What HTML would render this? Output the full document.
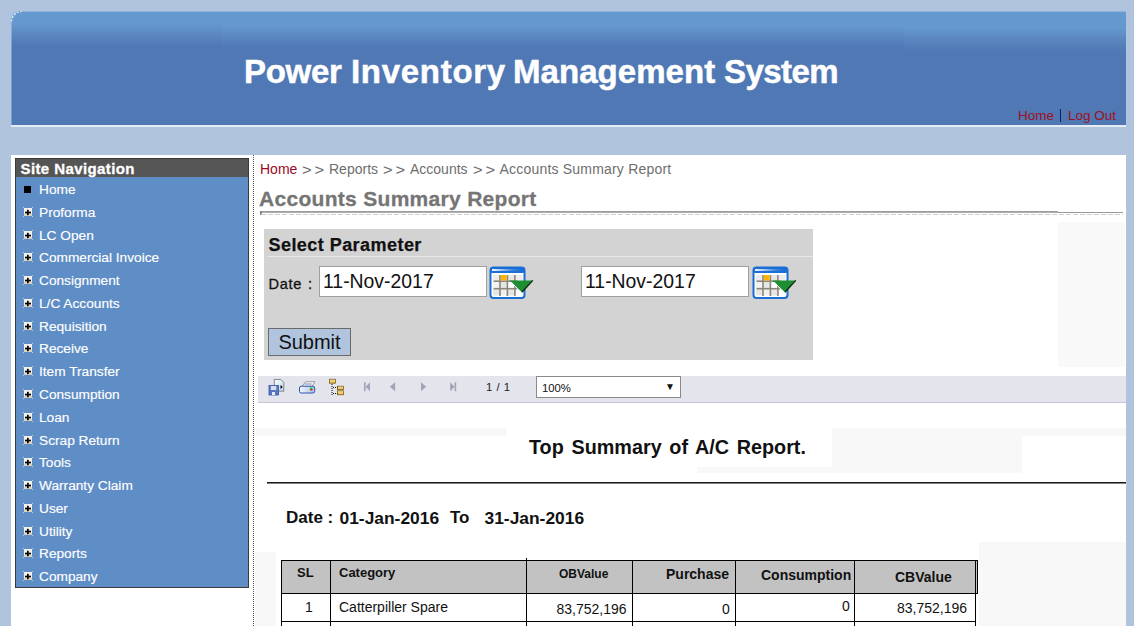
<!DOCTYPE html>
<html><head><meta charset="utf-8">
<style>
*{box-sizing:border-box}
html,body{margin:0;padding:0}
body{width:1134px;height:626px;overflow:hidden;background:#b0c4de;position:relative;font-family:"Liberation Sans",sans-serif}
.abs{position:absolute}
#hdr{left:11px;top:11px;width:1115px;height:114px;border-top-left-radius:10px;
 background:linear-gradient(to bottom,#6a9bd0 0px,#6699cf 1px,#6598ce 15px,#5b87c1 26px,#4f78b4 37px,#4f78b4 114px)}
#hline{left:11px;top:125px;width:1115px;height:2px;background:#e6ecf4}
#title span{position:absolute;top:0}
#title{left:244px;top:53px;font-size:33px;letter-spacing:0.05px;-webkit-text-stroke:0.5px #fff;font-weight:bold;color:#fff;white-space:nowrap}
#toplinks{left:1018px;top:108px;font-size:13.5px;color:#a01020;white-space:nowrap}
#toplinks i{position:absolute;left:41.5px;top:1px;width:1.5px;height:13px;background:#101c66}
#toplinks u{position:absolute;left:50px;top:0;text-decoration:none}
#wrap{left:11px;top:155px;width:1115px;height:480px;background:#fff}
#nav{left:15px;top:158px;width:234px;height:430px;background:#5f8dc6;border:1px solid #3a3a3a}
#navh{left:0;top:0;width:232px;height:18px;background:#555;color:#fff;font-weight:bold;font-size:15px;letter-spacing:0.4px;-webkit-text-stroke:0.3px #fff;padding-left:4.5px;line-height:20px}
.ni{position:absolute;left:23px;color:#fff;font-size:13.7px;-webkit-text-stroke:0.15px #fff;white-space:nowrap}
.ni .pl{position:absolute;left:-16px;top:2px}
.ni .sq{position:absolute;left:-15px;top:4px;width:7px;height:7px;background:#000}
#vdot{left:253px;top:155px;width:1px;height:471px;border-left:1px dotted #555}
#crumb{left:260px;top:161px;font-size:14px;color:#6e6e6e;white-space:nowrap}
#crumb>*{position:absolute;top:0;font-style:normal;font-weight:normal}
#crumb b{color:#9a0a1e}
#crumb i{letter-spacing:2.5px;transform:scaleX(1.18);transform-origin:0 0;top:0.5px}
#ptitle{left:259px;top:187px;font-size:21px;letter-spacing:0.3px;font-weight:bold;color:#757575;-webkit-text-stroke:0.3px #757575;white-space:nowrap}
#l1{left:260px;top:211px;width:798px;height:2px;background:linear-gradient(#979797,#b5b5b5)}
#l1b{left:1058px;top:212px;width:65px;height:1px;background:#999}
#ltick{left:260px;top:211px;width:1.5px;height:4px;background:#8a8a8a}
#l2{left:261px;top:214px;width:862px;height:1px;background:repeating-linear-gradient(to right,#cfcfcf 0,#cfcfcf 5px,transparent 5px,transparent 7px)}
#rgray{left:1058px;top:222px;width:67px;height:145px;background:#f9f9f9}
#pbox{left:264px;top:229px;width:549px;height:131px;background:#d3d3d3}
#psel{left:268.5px;top:235px;font-size:18px;letter-spacing:0.45px;-webkit-text-stroke:0.25px #111;font-weight:bold;color:#111;white-space:nowrap}
#pline{left:268px;top:256px;width:545px;height:1px;background:#e8e8e8}
#dlbl{left:268.5px;top:275.5px;font-size:14.6px;letter-spacing:0.7px;-webkit-text-stroke:0.3px #111;color:#111}
.inp{position:absolute;top:266px;width:168px;height:31px;background:#fff;border:1px solid #a0a0a0;font-size:19.4px;color:#111;padding:3px 0 0 3px;white-space:nowrap}
.calw{position:absolute;top:266px;width:46px;height:34px}
.calw svg{display:block}
#submit{left:268px;top:328px;width:83px;height:28px;background:#b0c4de;border:1.5px solid #6a6a6a;font-size:20px;color:#111;text-align:center;line-height:27px;padding-left:0px}
#tbar{left:258px;top:376px;width:868px;height:27px;background:#e4e4ec;border-bottom:1px solid #c4c4d4}
#sel{left:536px;top:376px;width:145px;height:22px;background:#fff;border:1px solid #8a8a8a;font-size:11.3px;line-height:14px;padding:4px 0 0 5px;color:#111}
#pg{left:486px;top:380.5px;font-size:11.3px;color:#222;word-spacing:1px}
#rtitle{left:529px;top:435.5px;font-size:19.8px;word-spacing:2.2px;font-weight:bold;color:#111;white-space:nowrap}
#hr2{left:267px;top:482px;width:859px;height:2px;background:linear-gradient(#1a1a1a 50%,#808080 50%)}
#dt{left:286px;top:508px;font-size:17px;font-weight:bold;color:#111;white-space:nowrap}
#dt span{position:absolute;top:0}
#tbl{left:0;top:0}
.hb{position:absolute;background:#c2c2c2}
.ln{position:absolute;background:#000}
.tx{position:absolute;white-space:nowrap;color:#111;font-size:14px;line-height:16px}
.th{font-weight:bold}
</style></head><body>
<div class="abs" style="left:11px;top:11px;width:11px;height:11px;background:#a9c4e6"></div>
<div id="hdr" class="abs"></div>
<div class="abs" style="left:11px;top:11px;width:211px;height:114px;border-top-left-radius:10px;background:linear-gradient(to bottom,#6a9bd0 0px,#6699cf 1px,#6598ce 13px,#5b87c1 24px,#4f78b4 35px,#4f78b4 114px)"></div>
<div class="abs" style="left:904px;top:11px;width:222px;height:114px;background:linear-gradient(to bottom,#6a9bd0 0px,#6699cf 1px,#6598ce 17px,#5b87c1 28px,#4f78b4 40px,#4f78b4 114px)"></div>
<svg class="abs" style="left:11px;top:11px" width="14" height="14" viewBox="0 0 14 14"><path d="M0.6,10.5 A10,10 0 0 1 10.5,0.6" fill="none" stroke="#f2f6fb" stroke-width="1.1" stroke-dasharray="2.2,1.3"/></svg>
<div class="abs" style="left:21px;top:11px;width:1105px;height:1px;background:#a9c4e6;opacity:0.6"></div>
<div class="abs" style="left:11px;top:21px;width:1px;height:104px;background:#a9c4e6;opacity:0.5"></div>
<div id="hline" class="abs"></div>
<div id="title" class="abs"><span style="left:0;letter-spacing:-0.3px">Power</span><span style="left:107px;letter-spacing:0.7px">Inventory</span><span style="left:269px">Management</span><span style="left:480px;letter-spacing:-0.55px">System</span></div>
<div id="toplinks" class="abs">Home<i></i><u>Log Out</u></div>
<div id="wrap" class="abs"></div>
<div id="nav" class="abs">
 <div id="navh" class="abs">Site Navigation</div>
 <div class="ni" style="top:23.00px"><i class="sq"></i>Home</div>
 <div class="ni" style="top:45.78px"><svg class="pl" width="10" height="10" viewBox="0 0 10 10"><rect x="1" y="1" width="8" height="8" fill="#f3f1ec"/><rect x="1" y="7" width="8" height="2" fill="#ddd3c2"/><rect x="2" y="4.7" width="6" height="1.7" fill="#000"/><rect x="4" y="2.8" width="1.7" height="5.4" fill="#000"/><rect x="0" y="0" width="1" height="1" fill="#c9c9c0"/><rect x="9" y="0" width="1" height="1" fill="#c9c9c0"/><rect x="0" y="9" width="1" height="1" fill="#c9c9c0"/><rect x="9" y="9" width="1" height="1" fill="#c9c9c0"/></svg>Proforma</div>
 <div class="ni" style="top:68.56px"><svg class="pl" width="10" height="10" viewBox="0 0 10 10"><rect x="1" y="1" width="8" height="8" fill="#f3f1ec"/><rect x="1" y="7" width="8" height="2" fill="#ddd3c2"/><rect x="2" y="4.7" width="6" height="1.7" fill="#000"/><rect x="4" y="2.8" width="1.7" height="5.4" fill="#000"/><rect x="0" y="0" width="1" height="1" fill="#c9c9c0"/><rect x="9" y="0" width="1" height="1" fill="#c9c9c0"/><rect x="0" y="9" width="1" height="1" fill="#c9c9c0"/><rect x="9" y="9" width="1" height="1" fill="#c9c9c0"/></svg>LC Open</div>
 <div class="ni" style="top:91.34px"><svg class="pl" width="10" height="10" viewBox="0 0 10 10"><rect x="1" y="1" width="8" height="8" fill="#f3f1ec"/><rect x="1" y="7" width="8" height="2" fill="#ddd3c2"/><rect x="2" y="4.7" width="6" height="1.7" fill="#000"/><rect x="4" y="2.8" width="1.7" height="5.4" fill="#000"/><rect x="0" y="0" width="1" height="1" fill="#c9c9c0"/><rect x="9" y="0" width="1" height="1" fill="#c9c9c0"/><rect x="0" y="9" width="1" height="1" fill="#c9c9c0"/><rect x="9" y="9" width="1" height="1" fill="#c9c9c0"/></svg>Commercial Invoice</div>
 <div class="ni" style="top:114.12px"><svg class="pl" width="10" height="10" viewBox="0 0 10 10"><rect x="1" y="1" width="8" height="8" fill="#f3f1ec"/><rect x="1" y="7" width="8" height="2" fill="#ddd3c2"/><rect x="2" y="4.7" width="6" height="1.7" fill="#000"/><rect x="4" y="2.8" width="1.7" height="5.4" fill="#000"/><rect x="0" y="0" width="1" height="1" fill="#c9c9c0"/><rect x="9" y="0" width="1" height="1" fill="#c9c9c0"/><rect x="0" y="9" width="1" height="1" fill="#c9c9c0"/><rect x="9" y="9" width="1" height="1" fill="#c9c9c0"/></svg>Consignment</div>
 <div class="ni" style="top:136.90px"><svg class="pl" width="10" height="10" viewBox="0 0 10 10"><rect x="1" y="1" width="8" height="8" fill="#f3f1ec"/><rect x="1" y="7" width="8" height="2" fill="#ddd3c2"/><rect x="2" y="4.7" width="6" height="1.7" fill="#000"/><rect x="4" y="2.8" width="1.7" height="5.4" fill="#000"/><rect x="0" y="0" width="1" height="1" fill="#c9c9c0"/><rect x="9" y="0" width="1" height="1" fill="#c9c9c0"/><rect x="0" y="9" width="1" height="1" fill="#c9c9c0"/><rect x="9" y="9" width="1" height="1" fill="#c9c9c0"/></svg>L/C Accounts</div>
 <div class="ni" style="top:159.68px"><svg class="pl" width="10" height="10" viewBox="0 0 10 10"><rect x="1" y="1" width="8" height="8" fill="#f3f1ec"/><rect x="1" y="7" width="8" height="2" fill="#ddd3c2"/><rect x="2" y="4.7" width="6" height="1.7" fill="#000"/><rect x="4" y="2.8" width="1.7" height="5.4" fill="#000"/><rect x="0" y="0" width="1" height="1" fill="#c9c9c0"/><rect x="9" y="0" width="1" height="1" fill="#c9c9c0"/><rect x="0" y="9" width="1" height="1" fill="#c9c9c0"/><rect x="9" y="9" width="1" height="1" fill="#c9c9c0"/></svg>Requisition</div>
 <div class="ni" style="top:182.46px"><svg class="pl" width="10" height="10" viewBox="0 0 10 10"><rect x="1" y="1" width="8" height="8" fill="#f3f1ec"/><rect x="1" y="7" width="8" height="2" fill="#ddd3c2"/><rect x="2" y="4.7" width="6" height="1.7" fill="#000"/><rect x="4" y="2.8" width="1.7" height="5.4" fill="#000"/><rect x="0" y="0" width="1" height="1" fill="#c9c9c0"/><rect x="9" y="0" width="1" height="1" fill="#c9c9c0"/><rect x="0" y="9" width="1" height="1" fill="#c9c9c0"/><rect x="9" y="9" width="1" height="1" fill="#c9c9c0"/></svg>Receive</div>
 <div class="ni" style="top:205.24px"><svg class="pl" width="10" height="10" viewBox="0 0 10 10"><rect x="1" y="1" width="8" height="8" fill="#f3f1ec"/><rect x="1" y="7" width="8" height="2" fill="#ddd3c2"/><rect x="2" y="4.7" width="6" height="1.7" fill="#000"/><rect x="4" y="2.8" width="1.7" height="5.4" fill="#000"/><rect x="0" y="0" width="1" height="1" fill="#c9c9c0"/><rect x="9" y="0" width="1" height="1" fill="#c9c9c0"/><rect x="0" y="9" width="1" height="1" fill="#c9c9c0"/><rect x="9" y="9" width="1" height="1" fill="#c9c9c0"/></svg>Item Transfer</div>
 <div class="ni" style="top:228.02px"><svg class="pl" width="10" height="10" viewBox="0 0 10 10"><rect x="1" y="1" width="8" height="8" fill="#f3f1ec"/><rect x="1" y="7" width="8" height="2" fill="#ddd3c2"/><rect x="2" y="4.7" width="6" height="1.7" fill="#000"/><rect x="4" y="2.8" width="1.7" height="5.4" fill="#000"/><rect x="0" y="0" width="1" height="1" fill="#c9c9c0"/><rect x="9" y="0" width="1" height="1" fill="#c9c9c0"/><rect x="0" y="9" width="1" height="1" fill="#c9c9c0"/><rect x="9" y="9" width="1" height="1" fill="#c9c9c0"/></svg>Consumption</div>
 <div class="ni" style="top:250.80px"><svg class="pl" width="10" height="10" viewBox="0 0 10 10"><rect x="1" y="1" width="8" height="8" fill="#f3f1ec"/><rect x="1" y="7" width="8" height="2" fill="#ddd3c2"/><rect x="2" y="4.7" width="6" height="1.7" fill="#000"/><rect x="4" y="2.8" width="1.7" height="5.4" fill="#000"/><rect x="0" y="0" width="1" height="1" fill="#c9c9c0"/><rect x="9" y="0" width="1" height="1" fill="#c9c9c0"/><rect x="0" y="9" width="1" height="1" fill="#c9c9c0"/><rect x="9" y="9" width="1" height="1" fill="#c9c9c0"/></svg>Loan</div>
 <div class="ni" style="top:273.58px"><svg class="pl" width="10" height="10" viewBox="0 0 10 10"><rect x="1" y="1" width="8" height="8" fill="#f3f1ec"/><rect x="1" y="7" width="8" height="2" fill="#ddd3c2"/><rect x="2" y="4.7" width="6" height="1.7" fill="#000"/><rect x="4" y="2.8" width="1.7" height="5.4" fill="#000"/><rect x="0" y="0" width="1" height="1" fill="#c9c9c0"/><rect x="9" y="0" width="1" height="1" fill="#c9c9c0"/><rect x="0" y="9" width="1" height="1" fill="#c9c9c0"/><rect x="9" y="9" width="1" height="1" fill="#c9c9c0"/></svg>Scrap Return</div>
 <div class="ni" style="top:296.36px"><svg class="pl" width="10" height="10" viewBox="0 0 10 10"><rect x="1" y="1" width="8" height="8" fill="#f3f1ec"/><rect x="1" y="7" width="8" height="2" fill="#ddd3c2"/><rect x="2" y="4.7" width="6" height="1.7" fill="#000"/><rect x="4" y="2.8" width="1.7" height="5.4" fill="#000"/><rect x="0" y="0" width="1" height="1" fill="#c9c9c0"/><rect x="9" y="0" width="1" height="1" fill="#c9c9c0"/><rect x="0" y="9" width="1" height="1" fill="#c9c9c0"/><rect x="9" y="9" width="1" height="1" fill="#c9c9c0"/></svg>Tools</div>
 <div class="ni" style="top:319.14px"><svg class="pl" width="10" height="10" viewBox="0 0 10 10"><rect x="1" y="1" width="8" height="8" fill="#f3f1ec"/><rect x="1" y="7" width="8" height="2" fill="#ddd3c2"/><rect x="2" y="4.7" width="6" height="1.7" fill="#000"/><rect x="4" y="2.8" width="1.7" height="5.4" fill="#000"/><rect x="0" y="0" width="1" height="1" fill="#c9c9c0"/><rect x="9" y="0" width="1" height="1" fill="#c9c9c0"/><rect x="0" y="9" width="1" height="1" fill="#c9c9c0"/><rect x="9" y="9" width="1" height="1" fill="#c9c9c0"/></svg>Warranty Claim</div>
 <div class="ni" style="top:341.92px"><svg class="pl" width="10" height="10" viewBox="0 0 10 10"><rect x="1" y="1" width="8" height="8" fill="#f3f1ec"/><rect x="1" y="7" width="8" height="2" fill="#ddd3c2"/><rect x="2" y="4.7" width="6" height="1.7" fill="#000"/><rect x="4" y="2.8" width="1.7" height="5.4" fill="#000"/><rect x="0" y="0" width="1" height="1" fill="#c9c9c0"/><rect x="9" y="0" width="1" height="1" fill="#c9c9c0"/><rect x="0" y="9" width="1" height="1" fill="#c9c9c0"/><rect x="9" y="9" width="1" height="1" fill="#c9c9c0"/></svg>User</div>
 <div class="ni" style="top:364.70px"><svg class="pl" width="10" height="10" viewBox="0 0 10 10"><rect x="1" y="1" width="8" height="8" fill="#f3f1ec"/><rect x="1" y="7" width="8" height="2" fill="#ddd3c2"/><rect x="2" y="4.7" width="6" height="1.7" fill="#000"/><rect x="4" y="2.8" width="1.7" height="5.4" fill="#000"/><rect x="0" y="0" width="1" height="1" fill="#c9c9c0"/><rect x="9" y="0" width="1" height="1" fill="#c9c9c0"/><rect x="0" y="9" width="1" height="1" fill="#c9c9c0"/><rect x="9" y="9" width="1" height="1" fill="#c9c9c0"/></svg>Utility</div>
 <div class="ni" style="top:387.48px"><svg class="pl" width="10" height="10" viewBox="0 0 10 10"><rect x="1" y="1" width="8" height="8" fill="#f3f1ec"/><rect x="1" y="7" width="8" height="2" fill="#ddd3c2"/><rect x="2" y="4.7" width="6" height="1.7" fill="#000"/><rect x="4" y="2.8" width="1.7" height="5.4" fill="#000"/><rect x="0" y="0" width="1" height="1" fill="#c9c9c0"/><rect x="9" y="0" width="1" height="1" fill="#c9c9c0"/><rect x="0" y="9" width="1" height="1" fill="#c9c9c0"/><rect x="9" y="9" width="1" height="1" fill="#c9c9c0"/></svg>Reports</div>
 <div class="ni" style="top:410.26px"><svg class="pl" width="10" height="10" viewBox="0 0 10 10"><rect x="1" y="1" width="8" height="8" fill="#f3f1ec"/><rect x="1" y="7" width="8" height="2" fill="#ddd3c2"/><rect x="2" y="4.7" width="6" height="1.7" fill="#000"/><rect x="4" y="2.8" width="1.7" height="5.4" fill="#000"/><rect x="0" y="0" width="1" height="1" fill="#c9c9c0"/><rect x="9" y="0" width="1" height="1" fill="#c9c9c0"/><rect x="0" y="9" width="1" height="1" fill="#c9c9c0"/><rect x="9" y="9" width="1" height="1" fill="#c9c9c0"/></svg>Company</div>
</div>
<div id="vdot" class="abs"></div>
<div id="crumb" class="abs"><b style="left:0">Home</b><i style="left:42.3px">&gt;&gt;</i><span style="left:69px">Reports</span><i style="left:123.3px">&gt;&gt;</i><span style="left:150px">Accounts</span><i style="left:212.5px">&gt;&gt;</i><span style="left:239.5px;letter-spacing:0.2px">Accounts Summary Report</span></div>
<div id="ptitle" class="abs">Accounts Summary Report</div>
<div id="l1" class="abs"></div><div id="l1b" class="abs"></div><div id="ltick" class="abs"></div>
<div id="l2" class="abs"></div>
<div id="rgray" class="abs"></div>
<div id="pbox" class="abs"></div>
<div id="psel" class="abs">Select Parameter</div>
<div id="pline" class="abs"></div>
<div id="dlbl" class="abs">Date<span style="position:absolute;left:39.5px;top:0">:</span></div>
<div class="inp" style="left:319px">11-Nov-2017</div>
<div class="calw" style="left:489px"><svg class="cal" width="46" height="34" viewBox="0 0 46 34"><defs><linearGradient id="hg" x1="0" y1="0" x2="1" y2="0"><stop offset="0" stop-color="#fff" stop-opacity="0.95"/><stop offset="0.7" stop-color="#fff" stop-opacity="0.2"/><stop offset="1" stop-color="#fff" stop-opacity="0"/></linearGradient></defs>
<rect x="1.5" y="1.5" width="34" height="30.5" rx="3" fill="#fff" stroke="#1b6ed6" stroke-width="2"/>
<rect x="1" y="1" width="35" height="6" rx="2.5" fill="#1b6ed6"/><rect x="3" y="3" width="28" height="2" fill="url(#hg)"/>
<rect x="4" y="9" width="7" height="5.5" fill="#ececec"/><rect x="19" y="9" width="7" height="5.5" fill="#e6e6e6"/><rect x="26.5" y="9" width="7" height="5.5" fill="#ececec"/>
<rect x="4" y="16" width="7" height="6" fill="#f2f2f2"/><rect x="12" y="16" width="6" height="6" fill="#e6e6e6"/><rect x="4" y="23.5" width="7" height="6" fill="#e6e6e6"/><rect x="12" y="23.5" width="6" height="6" fill="#efefef"/><rect x="19" y="23.5" width="7" height="6" fill="#e6e6e6"/>
<rect x="10.2" y="9" width="1.6" height="21" fill="#8c857a"/><rect x="17.6" y="9" width="1.6" height="21" fill="#8c857a"/><rect x="25.1" y="9" width="1.6" height="21" fill="#8c857a"/>
<rect x="4.5" y="14.4" width="24" height="1.6" fill="#8c857a"/><rect x="4.5" y="21.9" width="24" height="1.6" fill="#8c857a"/>
<rect x="11.8" y="9" width="5.8" height="5.4" fill="#ffb400"/>
<polygon points="20.5,14.4 43.8,14.4 32.9,26.3" fill="#1e8e32"/>
<polyline points="43.8,14.4 32.9,26.3" fill="none" stroke="#0a2a10" stroke-width="1.3"/>
<polyline points="22.2,16 33,27.5" fill="none" stroke="#f4f4f4" stroke-width="1"/>
</svg></div>
<div class="inp" style="left:581px">11-Nov-2017</div>
<div class="calw" style="left:752px"><svg class="cal" width="46" height="34" viewBox="0 0 46 34"><defs><linearGradient id="hg2" x1="0" y1="0" x2="1" y2="0"><stop offset="0" stop-color="#fff" stop-opacity="0.95"/><stop offset="0.7" stop-color="#fff" stop-opacity="0.2"/><stop offset="1" stop-color="#fff" stop-opacity="0"/></linearGradient></defs>
<rect x="1.5" y="1.5" width="34" height="30.5" rx="3" fill="#fff" stroke="#1b6ed6" stroke-width="2"/>
<rect x="1" y="1" width="35" height="6" rx="2.5" fill="#1b6ed6"/><rect x="3" y="3" width="28" height="2" fill="url(#hg2)"/>
<rect x="4" y="9" width="7" height="5.5" fill="#ececec"/><rect x="19" y="9" width="7" height="5.5" fill="#e6e6e6"/><rect x="26.5" y="9" width="7" height="5.5" fill="#ececec"/>
<rect x="4" y="16" width="7" height="6" fill="#f2f2f2"/><rect x="12" y="16" width="6" height="6" fill="#e6e6e6"/><rect x="4" y="23.5" width="7" height="6" fill="#e6e6e6"/><rect x="12" y="23.5" width="6" height="6" fill="#efefef"/><rect x="19" y="23.5" width="7" height="6" fill="#e6e6e6"/>
<rect x="10.2" y="9" width="1.6" height="21" fill="#8c857a"/><rect x="17.6" y="9" width="1.6" height="21" fill="#8c857a"/><rect x="25.1" y="9" width="1.6" height="21" fill="#8c857a"/>
<rect x="4.5" y="14.4" width="24" height="1.6" fill="#8c857a"/><rect x="4.5" y="21.9" width="24" height="1.6" fill="#8c857a"/>
<rect x="11.8" y="9" width="5.8" height="5.4" fill="#ffb400"/>
<polygon points="20.5,14.4 43.8,14.4 32.9,26.3" fill="#1e8e32"/>
<polyline points="43.8,14.4 32.9,26.3" fill="none" stroke="#0a2a10" stroke-width="1.3"/>
<polyline points="22.2,16 33,27.5" fill="none" stroke="#f4f4f4" stroke-width="1"/>
</svg></div>
<div id="submit" class="abs">Submit</div>
<div id="tbar" class="abs"></div>
<svg class="abs" style="left:258px;top:376px" width="240" height="26" viewBox="0 0 240 26">
<defs><linearGradient id="pg1" x1="0" y1="0" x2="1" y2="1"><stop offset="0" stop-color="#fff"/><stop offset="1" stop-color="#b8d4f0"/></linearGradient>
<linearGradient id="pr1" x1="0" y1="0" x2="1" y2="0"><stop offset="0" stop-color="#f4f8ff"/><stop offset="1" stop-color="#a9c3ea"/></linearGradient>
<linearGradient id="fy" x1="0" y1="0" x2="0" y2="1"><stop offset="0" stop-color="#ffe9a0"/><stop offset="1" stop-color="#e8b040"/></linearGradient></defs>
<!-- export -->
<path d="M16.3,3.5 h6.5 l3,3 v8.7 h-9.5 z" fill="url(#pg1)" stroke="#7a7a7a" stroke-width="0.9"/>
<path d="M22.5,9 l2.2,2 l-2.2,2 z" fill="#000"/>
<rect x="11" y="9.5" width="9.5" height="9.5" fill="#5577c4" stroke="#3855a0" stroke-width="0.8"/>
<rect x="12.8" y="10" width="5.5" height="4" fill="#d8dff0"/>
<rect x="14" y="16" width="3" height="3" fill="#e8ecf4"/>
<!-- printer -->
<path d="M44,10.5 l3.5,-4.8 h9.5 l-3,4.8 z" fill="#f4f4f4" stroke="#8a8a8a" stroke-width="0.8"/><path d="M46.5,8 h7" stroke="#5577bb" stroke-width="0.8"/>
<rect x="41.5" y="10.2" width="15.2" height="6.8" rx="1.8" fill="url(#pr1)" stroke="#2c55b0" stroke-width="1"/>
<rect x="52" y="11.5" width="2.5" height="1.5" fill="#22cc33"/><rect x="52" y="13" width="2.5" height="1.5" fill="#dd2222"/>
<!-- tree -->
<rect x="71.5" y="3.2" width="6" height="4" fill="url(#fy)" stroke="#6a5010" stroke-width="0.7"/>
<rect x="79.5" y="10.2" width="6" height="3.5" fill="url(#fy)" stroke="#6a5010" stroke-width="0.7"/>
<rect x="79.5" y="14.8" width="6" height="4" fill="url(#fy)" stroke="#6a5010" stroke-width="0.7"/>
<path d="M74,8 v11" stroke="#111" stroke-width="1" stroke-dasharray="1,1" fill="none"/><path d="M75,11.5 h4.5 M75,17.5 h4.5" stroke="#111" stroke-width="1" stroke-dasharray="1,1" fill="none"/>
<!-- nav arrows -->
<rect x="106" y="6.2" width="1.6" height="9" fill="#a3a3ba"/><path d="M112,6.2 v9 l-4.4,-4.5 z" fill="#a3a3ba"/>
<path d="M137.2,6.2 v9 l-5.4,-4.5 z" fill="#a3a3ba"/>
<path d="M163,6.2 v9 l5.2,-4.5 z" fill="#a3a3ba"/>
<path d="M192.2,6.2 v9 l4.4,-4.5 z" fill="#a3a3ba"/><rect x="196.6" y="6.2" width="1.6" height="9" fill="#a3a3ba"/>
</svg>
<div id="pg" class="abs">1 / 1</div>
<div id="sel" class="abs">100%<span style="position:absolute;left:128px;top:3px;font-size:10px">&#9660;</span></div>
<div class="abs" style="left:254px;top:428px;width:872px;height:8px;background:#f8f8f8"></div>
<div class="abs" style="left:507px;top:428px;width:325px;height:39px;background:#fff"></div>
<div class="abs" style="left:832px;top:436px;width:190px;height:37px;background:#f8f8f8"></div>
<div class="abs" style="left:697px;top:467px;width:135px;height:6px;background:#f8f8f8"></div>
<div class="abs" style="left:979px;top:542px;width:147px;height:84px;background:#f8f8f8"></div>
<div class="abs" style="left:255px;top:552px;width:21px;height:74px;background:#f8f8f8"></div>
<div id="rtitle" class="abs">Top Summary of A/C Report.</div>
<div id="hr2" class="abs"></div>
<div id="dt" class="abs"><span style="left:0">Date :</span><span style="left:53.5px;font-size:17.4px">01-Jan-2016</span><span style="left:164px;top:-0.5px">To</span><span style="left:198.5px;font-size:17.4px">31-Jan-2016</span></div>
<div class="hb" style="left:281px;top:560px;width:696px;height:33px"></div>
<div class="ln" style="left:281px;top:560px;width:697px;height:1px"></div>
<div class="ln" style="left:281px;top:593px;width:697px;height:1px"></div>
<div class="ln" style="left:281px;top:621px;width:695px;height:1px"></div>
<div class="ln" style="left:281px;top:560px;width:1px;height:66px"></div>
<div class="ln" style="left:330px;top:560px;width:1px;height:66px"></div>
<div class="ln" style="left:526px;top:558px;width:1px;height:68px"></div>
<div class="ln" style="left:632px;top:560px;width:1px;height:66px"></div>
<div class="ln" style="left:735px;top:560px;width:1px;height:66px"></div>
<div class="ln" style="left:854px;top:560px;width:1px;height:66px"></div>
<div class="ln" style="left:975px;top:560px;width:1px;height:66px"></div>
<div class="ln" style="left:977px;top:560px;width:1px;height:34px"></div>
<div class="tx th" style="left:297px;top:565px;font-size:13px">SL</div>
<div class="tx th" style="left:339px;top:564.5px;font-size:13px">Category</div>
<div class="tx th" style="left:559px;top:566px;font-size:12px">OBValue</div>
<div class="tx th" style="left:666px;top:565.5px;font-size:14px">Purchase</div>
<div class="tx th" style="left:761px;top:567px;font-size:14px">Consumption</div>
<div class="tx th" style="left:895px;top:568.5px;font-size:14px">CBValue</div>
<div class="tx" style="left:305px;top:598.5px;font-size:14px">1</div>
<div class="tx" style="left:339px;top:598.5px;font-size:14px">Catterpiller Spare</div>
<div class="tx" style="left:556.5px;top:600.5px;font-size:14px">83,752,196</div>
<div class="tx" style="left:722px;top:600.5px;font-size:14px">0</div>
<div class="tx" style="left:842px;top:597.5px;font-size:14px">0</div>
<div class="tx" style="left:897px;top:599.5px;font-size:14px">83,752,196</div>
</body></html>
